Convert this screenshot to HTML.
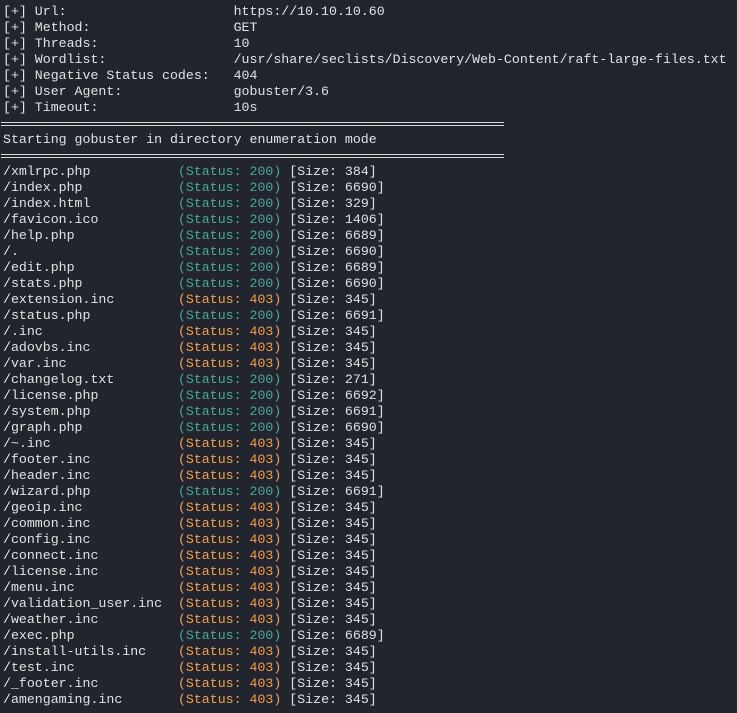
<!DOCTYPE html>
<html><head><meta charset="utf-8"><style>
html,body{margin:0;padding:0;background:#23252e;width:737px;height:713px;overflow:hidden}
pre{margin:0;padding:4px 0 0 3px;font-family:"Liberation Mono","DejaVu Sans Mono",monospace;font-size:13.25px;line-height:16px;color:#e2e2e2}
.g{color:#4aa89a}.o{color:#f0a050}
.dl{display:inline-block;width:503px;height:2px;border-top:1px solid #d8d8d8;border-bottom:1px solid #d8d8d8;vertical-align:middle;margin-left:-2px}
</style></head><body><pre>[+] Url:                     https://10.10.10.60
[+] Method:                  GET
[+] Threads:                 10
[+] Wordlist:                /usr/share/seclists/Discovery/Web-Content/raft-large-files.txt
[+] Negative Status codes:   404
[+] User Agent:              gobuster/3.6
[+] Timeout:                 10s
<span class="dl"></span>
Starting gobuster in directory enumeration mode
<span class="dl"></span>
/xmlrpc.php           <span class="g">(Status: 200)</span> [Size: 384]
/index.php            <span class="g">(Status: 200)</span> [Size: 6690]
/index.html           <span class="g">(Status: 200)</span> [Size: 329]
/favicon.ico          <span class="g">(Status: 200)</span> [Size: 1406]
/help.php             <span class="g">(Status: 200)</span> [Size: 6689]
/.                    <span class="g">(Status: 200)</span> [Size: 6690]
/edit.php             <span class="g">(Status: 200)</span> [Size: 6689]
/stats.php            <span class="g">(Status: 200)</span> [Size: 6690]
/extension.inc        <span class="o">(Status: 403)</span> [Size: 345]
/status.php           <span class="g">(Status: 200)</span> [Size: 6691]
/.inc                 <span class="o">(Status: 403)</span> [Size: 345]
/adovbs.inc           <span class="o">(Status: 403)</span> [Size: 345]
/var.inc              <span class="o">(Status: 403)</span> [Size: 345]
/changelog.txt        <span class="g">(Status: 200)</span> [Size: 271]
/license.php          <span class="g">(Status: 200)</span> [Size: 6692]
/system.php           <span class="g">(Status: 200)</span> [Size: 6691]
/graph.php            <span class="g">(Status: 200)</span> [Size: 6690]
/~.inc                <span class="o">(Status: 403)</span> [Size: 345]
/footer.inc           <span class="o">(Status: 403)</span> [Size: 345]
/header.inc           <span class="o">(Status: 403)</span> [Size: 345]
/wizard.php           <span class="g">(Status: 200)</span> [Size: 6691]
/geoip.inc            <span class="o">(Status: 403)</span> [Size: 345]
/common.inc           <span class="o">(Status: 403)</span> [Size: 345]
/config.inc           <span class="o">(Status: 403)</span> [Size: 345]
/connect.inc          <span class="o">(Status: 403)</span> [Size: 345]
/license.inc          <span class="o">(Status: 403)</span> [Size: 345]
/menu.inc             <span class="o">(Status: 403)</span> [Size: 345]
/validation_user.inc  <span class="o">(Status: 403)</span> [Size: 345]
/weather.inc          <span class="o">(Status: 403)</span> [Size: 345]
/exec.php             <span class="g">(Status: 200)</span> [Size: 6689]
/install-utils.inc    <span class="o">(Status: 403)</span> [Size: 345]
/test.inc             <span class="o">(Status: 403)</span> [Size: 345]
/_footer.inc          <span class="o">(Status: 403)</span> [Size: 345]
/amengaming.inc       <span class="o">(Status: 403)</span> [Size: 345]</pre></body></html>
